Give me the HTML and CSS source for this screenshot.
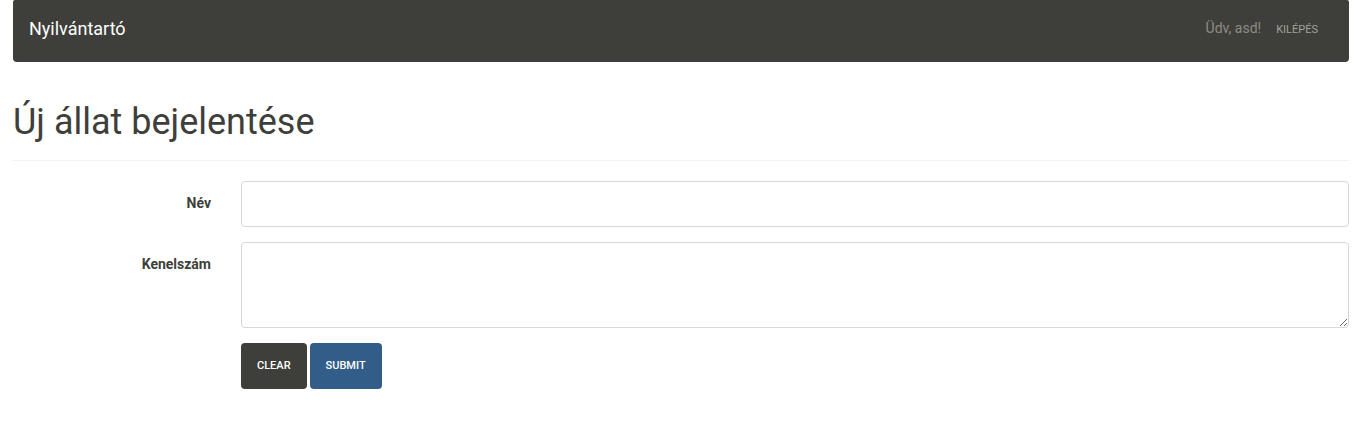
FILE: index.html
```html
<!DOCTYPE html>
<html lang="hu">
<head>
<meta charset="utf-8">
<title>Nyilvántartó</title>
<link rel="stylesheet" href="styles.css">
</head>
<body>
<nav class="navbar">
  <a class="brand" href="#">Nyilvántartó</a>
  <div class="navbar-user">
    <span class="greeting">Üdv, asd!</span>
    <a class="logout" href="#">Kilépés</a>
  </div>
</nav>
<main>
  <h1 class="page-title">Új állat bejelentése</h1>
  <form class="form">
    <label class="label" for="name">Név</label>
    <input class="control" id="name" type="text">
    <label class="label" for="kennel">Kenelszám</label>
    <textarea class="control control-area" id="kennel" rows="3"></textarea>
    <div class="actions">
      <button class="btn btn-default" type="reset">Clear</button>
      <button class="btn btn-primary" type="submit">Submit</button>
    </div>
  </form>
</main>
</body>
</html>
```
FILE: styles.css
```css
* { box-sizing: border-box; }
body {
  margin: 0;
  padding: 0 10px 0 13px;
  background: #fff;
  color: #3e3f3a;
  font-family: Roboto, sans-serif;
  font-size: 14px;
  line-height: 20px;
}
.navbar {
  display: flex;
  align-items: flex-start;
  justify-content: space-between;
  padding: 18px 31px 22px 16px;
  border-radius: 2px 2px 4px 4px;
  background: #3e3f3a;
}
.brand {
  color: #fff;
  font-size: 18px;
  line-height: 22px;
  text-decoration: none;
}
.navbar-user {
  display: flex;
  align-items: baseline;
  gap: 15px;
  color: #8e8c84;
}
.logout {
  color: #a3a299;
  font-size: 11px;
  text-decoration: none;
  text-transform: uppercase;
}
.page-title {
  margin: 40px 0 20px;
  padding-bottom: 18px;
  border-bottom: 1px solid #f3f2f0;
  font-size: 36px;
  font-weight: 400;
  line-height: 40px;
}
.form {
  display: grid;
  grid-template-columns: 198px 1fr;
  gap: 15px 30px;
}
.label {
  padding-top: 12px;
  font-weight: 700;
  text-align: right;
}
.control {
  display: block;
  width: 100%;
  height: 46px;
  margin: 0;
  padding: 12px 16px;
  border: 1px solid #d8d7d3;
  border-radius: 4px;
  background: #fff;
  color: inherit;
  font: inherit;
}
.control-area {
  height: 86px;
  resize: vertical;
}
.actions {
  display: flex;
  grid-column: 2;
  gap: 3px;
}
.btn {
  padding: 13px 16px;
  border: 0;
  border-radius: 4px;
  color: #fff;
  font: 500 11px/20px Roboto, sans-serif;
  text-transform: uppercase;
}
.btn-default { background: #3e3f3a; }
.btn-primary { background: #325d88; }
```
